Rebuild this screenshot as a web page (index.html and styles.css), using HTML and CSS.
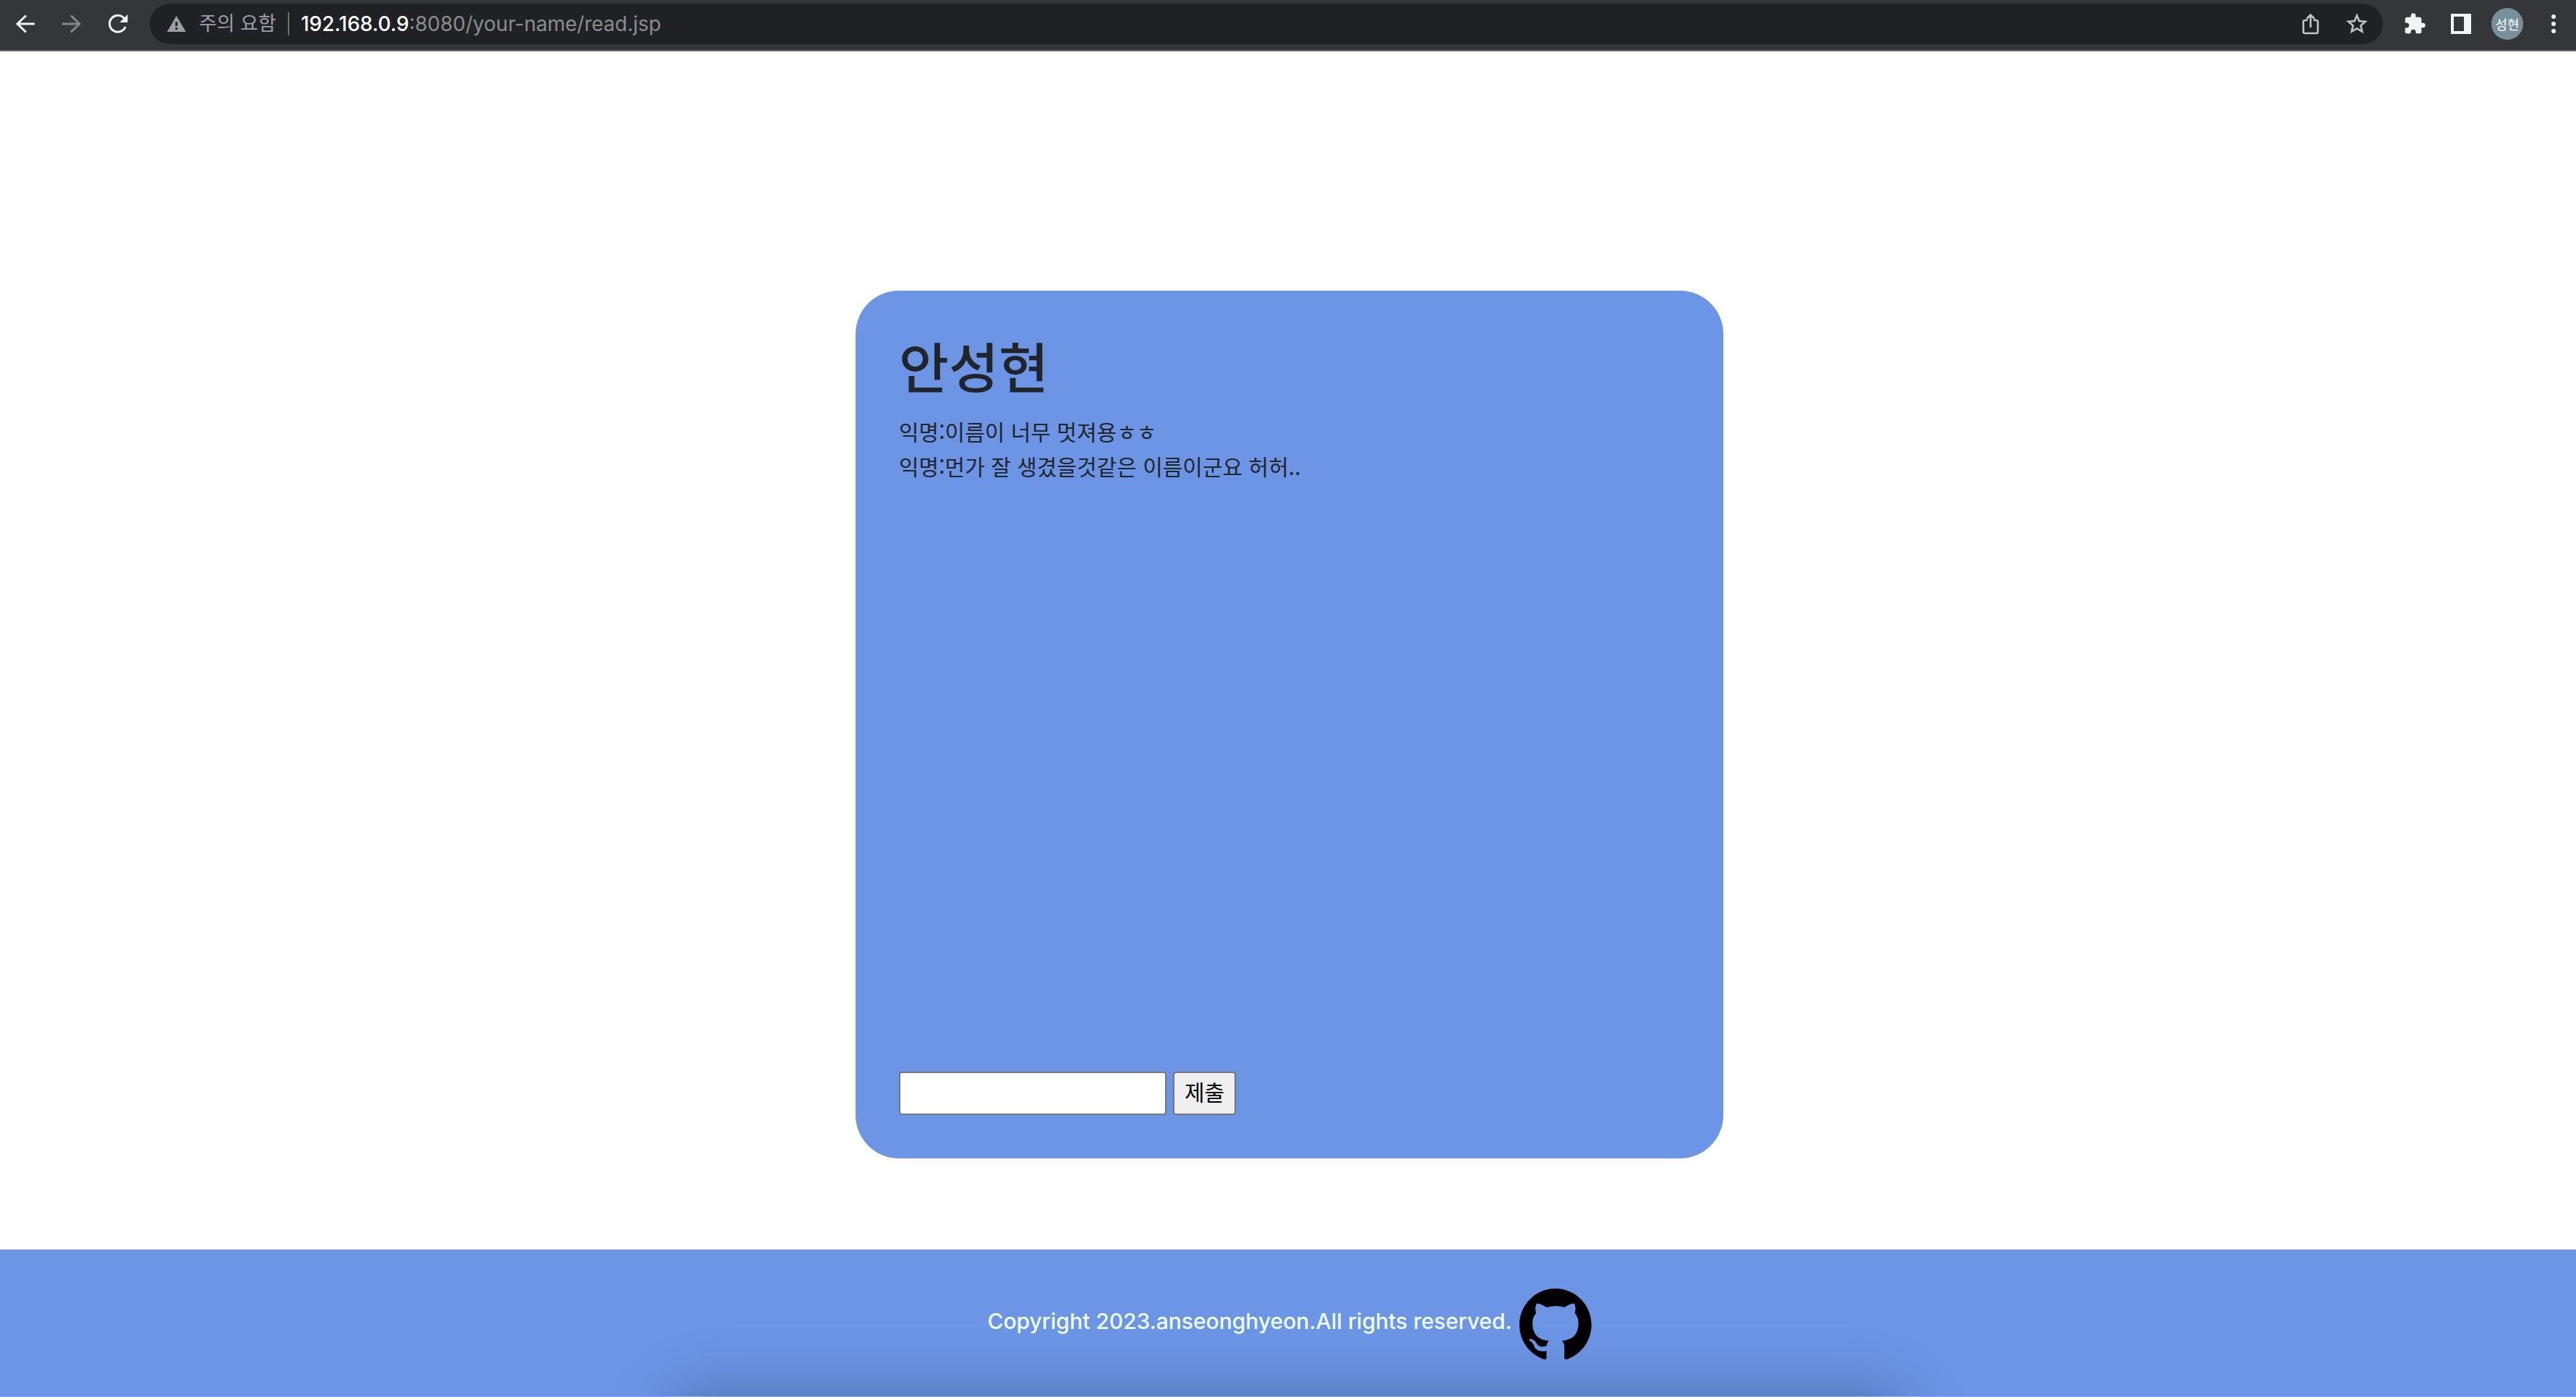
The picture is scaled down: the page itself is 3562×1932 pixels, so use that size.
FILE: index.html
```html
<!DOCTYPE html>
<html lang="ko">
<head>
<meta charset="utf-8">
<title>your-name</title>
<link rel="stylesheet" href="styles.css">
</head>
<body>
<header class="toolbar">
  <nav class="nav">
    <button class="icon-btn" type="button" aria-label="뒤로"><svg class="icon" viewBox="0 0 32 32"><path d="M29 16H5M17 4.500 5 16l12 11.500" fill="none" stroke="#f1f3f4" stroke-width="3"/></svg></button>
    <button class="icon-btn" type="button" aria-label="앞으로"><svg class="icon" viewBox="0 0 32 32"><path d="M3 16h24M15 4.500 27 16 15 27.500" fill="none" stroke="#85868a" stroke-width="3"/></svg></button>
    <button class="icon-btn" type="button" aria-label="새로고침"><svg class="icon" viewBox="0 0 32 32"><path d="M25.500 9.500A11.400 11.400 0 1 0 26.500 20" fill="none" stroke="#f1f3f4" stroke-width="3"/><path d="M29.500 3v11h-11z" fill="#f1f3f4"/></svg></button>
  </nav>
  <div class="omnibox">
    <svg class="warn" viewBox="0 0 26 22"><path fill="#9aa0a6" fill-rule="evenodd" d="M13 0 26 22H0zM11.500 8v6h3V8zm0 8v3h3v-3z"/></svg>
    <span class="warn-text">주의 요함</span>
    <span class="divider"></span>
    <span class="url"><b class="host">192.168.0.9</b>:8080/your-name/read.jsp</span>
    <button class="icon-btn" type="button" aria-label="공유"><svg class="icon" viewBox="0 0 32 32" fill="none" stroke="#c3c4c6" stroke-width="2.600"><path d="M12 11H8a2 2 0 0 0-2 2V27a2 2 0 0 0 2 2h16a2 2 0 0 0 2-2V13a2 2 0 0 0-2-2H20M16 21V4M10.500 9 16 3.500 21.500 9"/></svg></button>
    <button class="icon-btn" type="button" aria-label="북마크"><svg class="icon" viewBox="1 1 22 22"><path fill="#c3c4c6" stroke="#c3c4c6" stroke-width=".2" d="M22 9.240l-7.190-.62L12 2 9.190 8.630 2 9.240l5.460 4.730L5.820 21 12 17.270 18.180 21l-1.630-7.030L22 9.240zM12 15.400l-3.760 2.270 1-4.280-3.320-2.880 4.380-.38L12 6.100l1.710 4.040 4.380.38-3.320 2.880 1 4.280L12 15.400z"/></svg></button>
  </div>
  <div class="actions">
    <button class="icon-btn" type="button" aria-label="확장 프로그램"><svg class="icon" viewBox="0 0 24 24"><path fill="#f1f3f4" d="M20.500 11H19V7c0-1.100-.9-2-2-2h-4V3.500a2.500 2.500 0 0 0-5 0V5H4c-1.100 0-1.990.9-1.990 2v3.800H3.500c1.490 0 2.700 1.210 2.700 2.700s-1.210 2.700-2.700 2.700H2V20c0 1.100.9 2 2 2h3.800v-1.500c0-1.490 1.210-2.700 2.700-2.700s2.700 1.210 2.700 2.700V22H17c1.100 0 2-.9 2-2v-4h1.500a2.500 2.500 0 0 0 0-5z"/></svg></button>
    <button class="icon-btn" type="button" aria-label="측면 패널"><svg class="icon" viewBox="0 0 32 32"><path fill="#f1f3f4" fill-rule="evenodd" d="M2 2h28v28H2zM6 6v20h14V6z"/></svg></button>
    <button class="avatar" type="button">성현</button>
    <button class="icon-btn" type="button" aria-label="메뉴"><svg class="icon" viewBox="0 0 32 32" fill="#f1f3f4"><circle cx="16" cy="6" r="3"/><circle cx="16" cy="16" r="3"/><circle cx="16" cy="26" r="3"/></svg></button>
  </div>
</header>
<main class="page">
  <section class="card">
    <h1 class="name">안성현</h1>
    <ul class="comments">
      <li>익명:이름이 너무 멋져용ㅎㅎ</li>
      <li>익명:먼가 잘 생겼을것같은 이름이군요 허허..</li>
    </ul>
    <form class="comment-form">
      <input class="comment-input" type="text" name="comment" aria-label="댓글">
      <button class="submit" type="submit">제출</button>
    </form>
  </section>
</main>
<footer class="footer">
  <span class="copyright">Copyright 2023.anseonghyeon.All rights reserved.</span>
  <a class="github" href="#" aria-label="GitHub"><svg class="mark" viewBox="0 0 98 96"><path fill-rule="evenodd" d="M48.854 0C21.839 0 0 22 0 49.217c0 21.756 13.993 40.172 33.405 46.690 2.427.49 3.316-1.059 3.316-2.362 0-1.141-.08-5.052-.08-9.127-13.590 2.934-16.420-5.867-16.420-5.867-2.184-5.704-5.420-7.170-5.420-7.170-4.448-3.015.324-3.015.324-3.015 4.934.326 7.523 5.052 7.523 5.052 4.367 7.496 11.404 5.378 14.235 4.074.404-3.178 1.699-5.378 3.074-6.600-10.839-1.141-22.243-5.378-22.243-24.283 0-5.378 1.940-9.778 5.014-13.200-.485-1.222-2.184-6.275.486-13.038 0 0 4.125-1.304 13.426 5.052a46.970 46.970 0 0 1 12.214-1.630c4.125 0 8.330.571 12.213 1.630 9.302-6.356 13.427-5.052 13.427-5.052 2.670 6.763.97 11.816.485 13.038 3.155 3.422 5.015 7.822 5.015 13.200 0 18.905-11.404 23.060-22.324 24.283 1.780 1.548 3.316 4.481 3.316 9.126 0 6.600-.08 11.897-.08 13.526 0 1.304.89 2.853 3.316 2.364 19.412-6.520 33.405-24.935 33.405-46.691C97.707 22 75.788 0 48.854 0z"/></svg></a>
</footer>
</body>
</html>
```
FILE: styles.css
```css
* {
  box-sizing: border-box;
}

body {
  margin: 0;
  min-height: 100vh;
  display: flex;
  flex-direction: column;
  background: #fff;
  color: #212529;
  font-family: Inter, "Noto Sans CJK KR", sans-serif;
  font-size: 30px;
  line-height: 48px;
}

/* Browser toolbar */
.toolbar {
  display: flex;
  align-items: center;
  gap: 28px;
  height: 71px;
  padding: 0 15px 4px 19px;
  background: #35363a;
  border-bottom: 2px solid #5f5f66;
}

.nav,
.actions {
  display: flex;
  align-items: center;
  gap: 32px;
}

.icon-btn {
  display: flex;
  padding: 0;
  border: 0;
  background: none;
}

.icon {
  width: 32px;
  height: 32px;
}

.omnibox {
  flex: 1;
  display: flex;
  align-items: center;
  gap: 32px;
  height: 56px;
  padding: 0 20px 0 24px;
  border-radius: 28px;
  background: #202124;
  font-size: 28px;
  line-height: 40px;
}

.warn {
  width: 26px;
  height: 22px;
}

.warn-text {
  margin: 0 -16px 0 -14px;
  color: #9aa0a6;
  font-size: 27px;
}

.divider {
  width: 2px;
  height: 32px;
  background: #6f7276;
}

.url {
  flex: 1;
  margin-left: -16px;
  color: #8b8c8f;
}

.host {
  color: #fff;
  font-weight: 500;
}

.avatar {
  width: 44px;
  height: 44px;
  margin: 0 -6px;
  padding: 0;
  border: 0;
  border-radius: 50%;
  background: #78909c;
  color: #fff;
  font: 18px/44px "Noto Sans CJK KR", sans-serif;
}

/* Page */
.page {
  flex: 1;
  padding: 331px 0 126px 4px;
}

.card {
  display: flex;
  flex-direction: column;
  width: 1200px;
  max-width: 100%;
  min-height: 1200px;
  margin: 0 auto;
  padding: 60px;
  border-radius: 60px;
  background: #6c95e6;
  font-family: "Noto Sans CJK KR", sans-serif;
}

.name {
  margin: 0 0 24px;
  font-size: 75px;
  font-weight: 500;
  line-height: 86px;
}

.comments {
  margin: 0;
  padding: 0;
  list-style: none;
}

.comment-form {
  display: flex;
  gap: 9px;
  margin-top: auto;
}

.comment-input,
.submit {
  height: 60px;
  border: 2px solid #767676;
  border-radius: 4px;
  font: 30px/48px "Noto Sans CJK KR", sans-serif;
}

.comment-input {
  width: 370px;
  background: #fff;
}

.submit {
  padding: 0 14px 6px;
  background: #efefef;
  color: #000;
}

/* Footer */
.footer {
  position: relative;
  display: flex;
  justify-content: center;
  align-items: center;
  gap: 10px;
  height: 204px;
  padding: 2px 0 0 4px;
  overflow: hidden;
  background: #6c95e6;
  border-bottom: 1px solid #8fade8;
  color: azure;
}

/* Soft shade rising from the bottom edge */
.footer::after {
  content: "";
  position: absolute;
  top: 100%;
  left: 26%;
  right: 26%;
  height: 200px;
  border-radius: 40px;
  box-shadow: 0 0 90px rgba(0, 0, 0, 0.28);
}

.copyright {
  padding-bottom: 8px;
  font-weight: 500;
}

.github {
  display: flex;
  color: #000;
}

.mark {
  width: 100px;
  height: 98px;
}
```
